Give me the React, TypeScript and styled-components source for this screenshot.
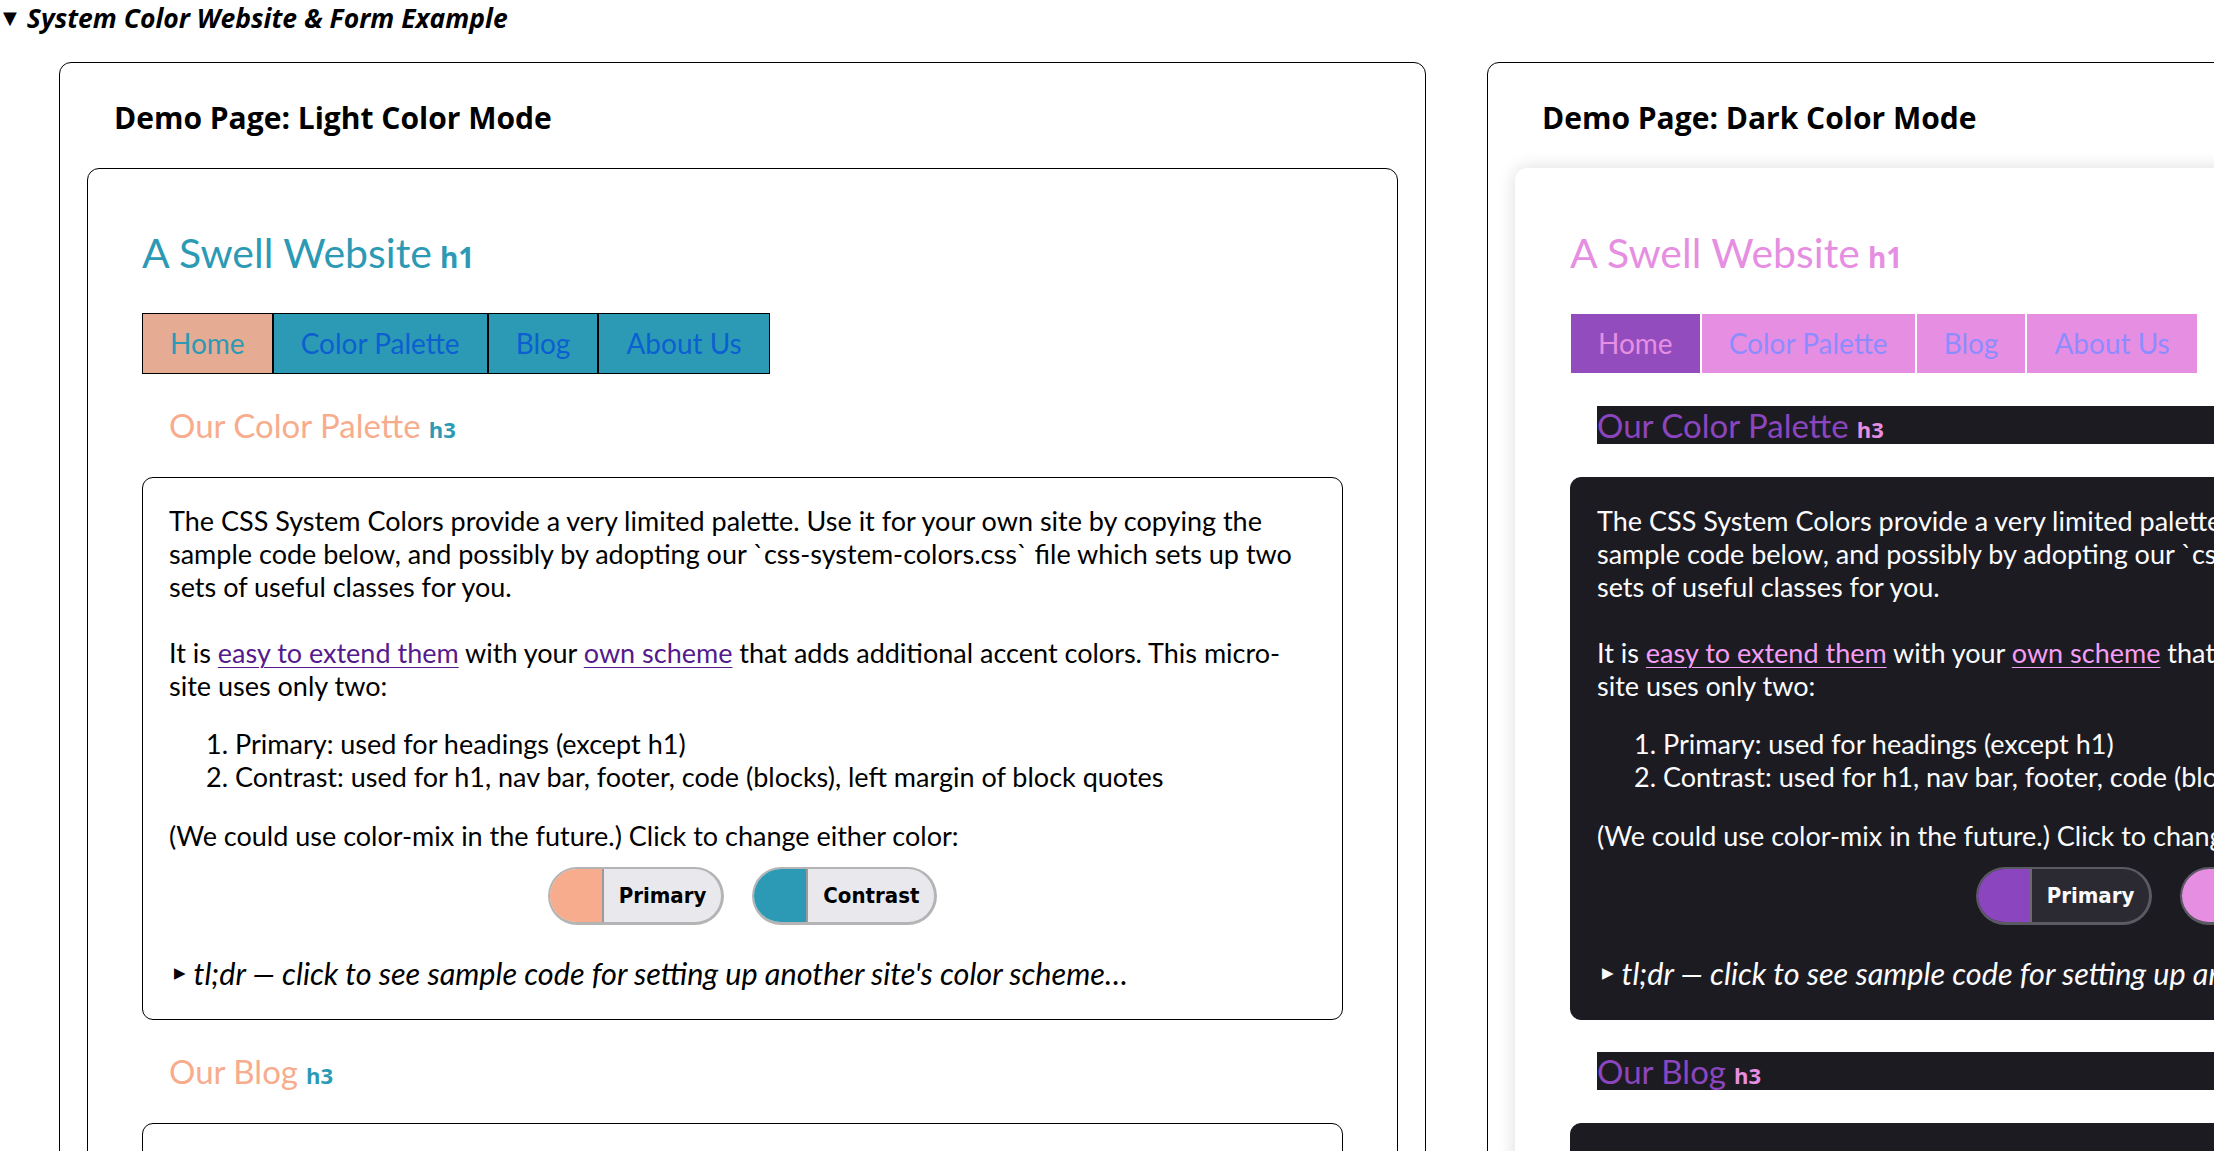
import React from "react";
import styled, { createGlobalStyle } from "styled-components";

type ModeProps = { $dark?: boolean };

const light = {
  primary: "#f7ad8d",
  contrast: "#2c9ab5",
  navHomeBg: "#e5ab93",
  navHomeText: "#2c9ab5",
  navBg: "#2c9ab5",
  navText: "#0b5fd0",
  navBorder: "#000000",
  h3Bg: "transparent",
  h3Text: "#f7ad8d",
  tag: "#2c9ab5",
  pageBorder: "#000000",
  pageShadow: "none",
  boxBg: "#ffffff",
  boxBorder: "#000000",
  text: "#000000",
  link: "#551a8b",
  btnFace: "#e9e9ed",
  btnBorder: "#b4b4b4",
  btnDivider: "#9a9a9a",
  btnText: "#000000",
};

const dark = {
  primary: "#8b45be",
  contrast: "#e68fe2",
  navHomeBg: "#934cbd",
  navHomeText: "#e68fe2",
  navBg: "#e68fe2",
  navText: "#8c8cff",
  navBorder: "#ffffff",
  h3Bg: "#1c1b22",
  h3Text: "#8b45be",
  tag: "#e68fe2",
  pageBorder: "transparent",
  pageShadow: "0 0 18px rgba(0, 0, 0, 0.14)",
  boxBg: "#1c1b22",
  boxBorder: "#1c1b22",
  text: "#fbfbfe",
  link: "#f59ef5",
  btnFace: "#2b2a33",
  btnBorder: "#5a5a62",
  btnDivider: "#6a6a70",
  btnText: "#fbfbfe",
};

type Key = keyof typeof light;
const c = (k: Key) => (p: ModeProps) => (p.$dark ? dark[k] : light[k]);

const GlobalStyle = createGlobalStyle`
  html, body {
    margin: 0;
    padding: 0;
    overflow: hidden;
    background: #ffffff;
  }
  body {
    font-family: "Open Sans", "Noto Sans", sans-serif;
    color: #000000;
  }
`;

const Details = styled.details`
  display: block;
`;

const Summary = styled.summary`
  display: flex;
  align-items: center;
  gap: 10px;
  height: 35px;
  padding-left: 3px;
  list-style: none;
  cursor: pointer;
  font-family: "Open Sans", "Noto Sans", sans-serif;
  font-weight: 700;
  font-style: italic;
  font-size: 26.5px;
  &::-webkit-details-marker {
    display: none;
  }
`;

const Marker = styled.span`
  font-family: "DejaVu Sans", sans-serif;
  font-style: normal;
  font-size: 18px;
`;

const DemoRow = styled.div`
  display: flex;
  gap: 61px;
  width: max-content;
  padding: 27px 0 0 59px;
`;

const DemoCard = styled.section`
  flex: 0 0 auto;
  width: 1367px;
  box-sizing: border-box;
  border: 1px solid #000;
  border-radius: 12px;
  padding: 0 27px 27px;
`;

const DemoTitle = styled.h2`
  margin: 0;
  padding: 35px 27px 0;
  font-family: "Open Sans", "Noto Sans", sans-serif;
  font-weight: 700;
  font-size: 30px;
  line-height: 40px;
`;

const SitePage = styled.div<ModeProps>`
  margin-top: 30px;
  border: 1px solid ${c("pageBorder")};
  border-radius: 12px;
  box-shadow: ${c("pageShadow")};
  background: #ffffff;
  padding: 59px 54px 60px;
  font-family: "Lato", "Open Sans", sans-serif;
`;

const SiteTitle = styled.h1<ModeProps>`
  margin: 0;
  font-family: "Lato", sans-serif;
  font-weight: 400;
  font-size: 41px;
  line-height: 50px;
  color: ${c("contrast")};
`;

const Tag = styled.span<ModeProps & { $size: number }>`
  margin-left: 8px;
  font-family: "Open Sans", sans-serif;
  font-weight: 700;
  font-size: ${(p) => p.$size}px;
  line-height: 1;
  color: ${c("tag")};
`;

const Nav = styled.nav`
  display: flex;
  width: max-content;
  margin-top: 35px;
`;

const NavItem = styled.a<ModeProps & { $current?: boolean }>`
  display: block;
  padding: 0 27px;
  line-height: 59px;
  font-family: "Lato", sans-serif;
  font-size: 28px;
  text-decoration: none;
  border: 1px solid ${c("navBorder")};
  background: ${(p) => (p.$current ? c("navHomeBg")(p) : c("navBg")(p))};
  color: ${(p) => (p.$current ? c("navHomeText")(p) : c("navText")(p))};
`;

const SectionTitle = styled.h3<ModeProps>`
  margin: 32px 0 33px 27px;
  font-family: "Lato", sans-serif;
  font-weight: 400;
  font-size: 33px;
  line-height: 38px;
  height: 38px;
  color: ${c("h3Text")};
  background: ${c("h3Bg")};
`;

const Box = styled.div<ModeProps & { $minHeight?: number }>`
  border: 1px solid ${c("boxBorder")};
  border-radius: 11px;
  background: ${c("boxBg")};
  color: ${c("text")};
  padding: 26px 26px 29px;
  min-height: ${(p) => p.$minHeight ?? 0}px;
  font-family: "Lato", sans-serif;
  font-size: 27px;
  line-height: 33px;
`;

const Para = styled.p<{ $after: number }>`
  margin: 0 0 ${(p) => p.$after}px;
  white-space: nowrap;
`;

const Link = styled.a<ModeProps>`
  color: ${c("link")};
  text-decoration: underline;
  text-underline-offset: 4px;
  text-decoration-thickness: 1px;
`;

const List = styled.ol`
  margin: 0 0 26px;
  padding-left: 66px;
`;

const ButtonRow = styled.div`
  display: flex;
  justify-content: center;
  gap: 28px;
  margin-bottom: 32px;
`;

const ColorButton = styled.button<ModeProps>`
  display: inline-flex;
  align-items: stretch;
  height: 58px;
  padding: 0;
  border: 2px solid ${c("btnBorder")};
  border-bottom-width: 3px;
  border-right-width: 3px;
  border-radius: 999px;
  overflow: hidden;
  background: ${c("btnFace")};
  color: ${c("btnText")};
  cursor: pointer;
`;

const Swatch = styled.span<{ $color: string } & ModeProps>`
  width: 52px;
  background: ${(p) => p.$color};
  border-right: 2px solid ${c("btnDivider")};
`;

const ButtonLabel = styled.span`
  display: flex;
  align-items: center;
  padding: 0 15px;
  font-family: "DejaVu Sans Condensed", "DejaVu Sans", sans-serif;
  font-stretch: condensed;
  font-weight: 700;
  font-size: 22px;
`;

const Tldr = styled.div`
  display: flex;
  align-items: center;
  gap: 8px;
  height: 33px;
  font-style: italic;
  font-size: 30.6px;
  white-space: nowrap;
`;

const TldrMarker = styled.span`
  font-family: "DejaVu Sans", sans-serif;
  font-style: normal;
  font-size: 15px;
  padding-left: 5px;
`;

function Demo({ darkMode }: { darkMode: boolean }) {
  const d = darkMode;
  return (
    <DemoCard>
      <DemoTitle>Demo Page: {d ? "Dark" : "Light"} Color Mode</DemoTitle>
      <SitePage $dark={d}>
        <SiteTitle $dark={d}>
          A Swell Website<Tag $dark={d} $size={28}>h1</Tag>
        </SiteTitle>
        <Nav>
          <NavItem $dark={d} $current>Home</NavItem>
          <NavItem $dark={d}>Color Palette</NavItem>
          <NavItem $dark={d}>Blog</NavItem>
          <NavItem $dark={d}>About Us</NavItem>
        </Nav>
        <SectionTitle $dark={d}>
          Our Color Palette<Tag $dark={d} $size={22}>h3</Tag>
        </SectionTitle>
        <Box $dark={d}>
          <Para $after={33}>
            The CSS System Colors provide a very limited palette. Use it for your own site by copying the
            <br />
            sample code below, and possibly by adopting our `css-system-colors.css` file which sets up two
            <br />
            sets of useful classes for you.
          </Para>
          <Para $after={25}>
            It is <Link $dark={d}>easy to extend them</Link> with your <Link $dark={d}>own scheme</Link> that
            adds additional accent colors. This micro-
            <br />
            site uses only two:
          </Para>
          <List>
            <li>Primary: used for headings (except h1)</li>
            <li>Contrast: used for h1, nav bar, footer, code (blocks), left margin of block quotes</li>
          </List>
          <Para $after={15}>(We could use color-mix in the future.) Click to change either color:</Para>
          <ButtonRow>
            <ColorButton $dark={d}>
              <Swatch $dark={d} $color={d ? dark.primary : light.primary} />
              <ButtonLabel>Primary</ButtonLabel>
            </ColorButton>
            <ColorButton $dark={d}>
              <Swatch $dark={d} $color={d ? dark.contrast : light.contrast} />
              <ButtonLabel>Contrast</ButtonLabel>
            </ColorButton>
          </ButtonRow>
          <Tldr>
            <TldrMarker>▶</TldrMarker>
            tl;dr — click to see sample code for setting up another site's color scheme…
          </Tldr>
        </Box>
        <SectionTitle $dark={d}>
          Our Blog<Tag $dark={d} $size={22}>h3</Tag>
        </SectionTitle>
        <Box $dark={d} $minHeight={300} />
      </SitePage>
    </DemoCard>
  );
}

export default function App() {
  return (
    <>
      <GlobalStyle />
      <Details open>
        <Summary>
          <Marker>▼</Marker>
          System Color Website &amp; Form Example
        </Summary>
        <DemoRow>
          <Demo darkMode={false} />
          <Demo darkMode={true} />
        </DemoRow>
      </Details>
    </>
  );
}
